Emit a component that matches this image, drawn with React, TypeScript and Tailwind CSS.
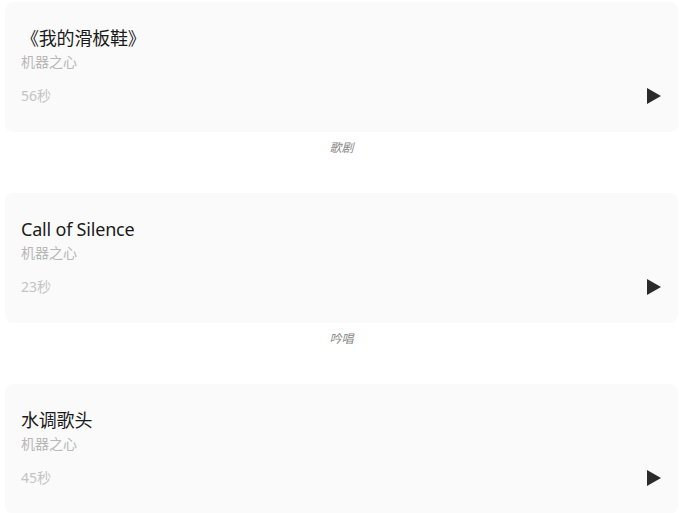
const songs = [
  { title: "《我的滑板鞋》", author: "机器之心", duration: "56秒", tag: "歌剧" },
  { title: "Call of Silence", author: "机器之心", duration: "23秒", tag: "吟唱" },
  { title: "水调歌头", author: "机器之心", duration: "45秒", tag: "" },
];

function PlayIcon() {
  return (
    <svg width="14" height="16" viewBox="0 0 14 16" className="block">
      <polygon points="0,0 14,8 0,16" fill="#2b2b2b" />
    </svg>
  );
}

export default function App() {
  return (
    <div
      className="min-h-[513px] w-[679px] bg-white pt-[2px]"
      style={{ fontFamily: '"Noto Sans", "Noto Sans CJK SC", sans-serif' }}
    >
      {songs.map((song, i) => (
        <div key={i}>
          <div className="ml-[5px] w-[673px] h-[130px] rounded-lg bg-[#fafafa] px-4 pt-[24px]">
            <div className="text-[18px] leading-[24px] tracking-[-0.2px] text-[#1a1a1a]">{song.title}</div>
            <div className="mt-[3px] text-[14px] leading-[18px] text-[#b8b8b8]">{song.author}</div>
            <div className="mt-[16px] flex items-center justify-between pr-[1px]">
              <span className="text-[14px] leading-[18px] text-[#c4c4c4]">{song.duration}</span>
              <PlayIcon />
            </div>
          </div>
          {i < songs.length - 1 && (
            <div className="ml-[5px] w-[673px] mt-[8px] mb-[37px] text-center text-[12px] leading-[16px] italic text-[#888]">
              {song.tag}
            </div>
          )}
        </div>
      ))}
    </div>
  );
}
